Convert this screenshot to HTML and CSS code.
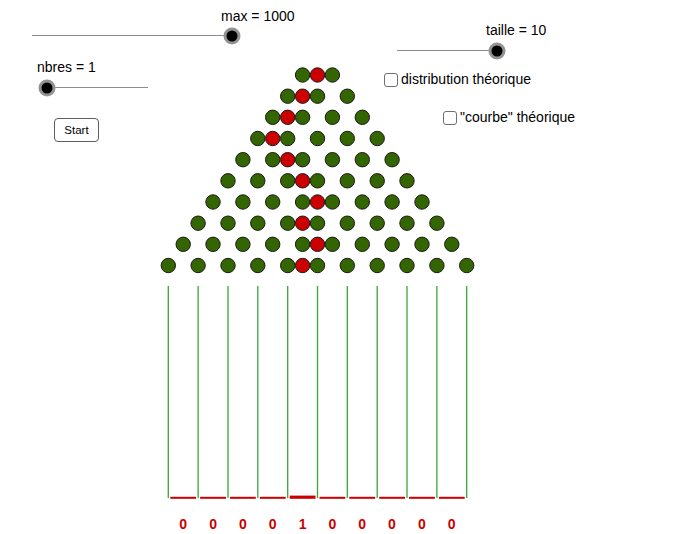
FILE: index.html
```html
<!DOCTYPE html>
<html lang="fr">
<head>
<meta charset="utf-8">
<title>Planche de Galton</title>
<link rel="stylesheet" href="styles.css">
</head>
<body>
<div class="applet">
  <div class="label label-max">max = 1000</div>
  <div class="slider slider-max"><span class="knob knob-end"></span></div>

  <div class="label label-nbres">nbres = 1</div>
  <div class="slider slider-nbres"><span class="knob knob-start"></span></div>

  <div class="label label-taille">taille = 10</div>
  <div class="slider slider-taille"><span class="knob knob-end"></span></div>

  <label class="check check-distrib"><span class="box"></span><span>distribution théorique</span></label>
  <label class="check check-courbe"><span class="box"></span><span>"courbe" théorique</span></label>

  <button class="start" type="button">Start</button>

  <svg class="board" width="340" height="450" viewBox="150 60 340 450" xmlns="http://www.w3.org/2000/svg">
    <g class="pegs" fill="#336600" stroke="#1a1a1a" stroke-width="1">
      <circle cx="302.6" cy="75" r="7.2"/><circle cx="332.4" cy="75" r="7.2"/>

      <circle cx="287.7" cy="96.2" r="7.2"/><circle cx="317.5" cy="96.2" r="7.2"/><circle cx="347.3" cy="96.2" r="7.2"/>

      <circle cx="272.7" cy="117.3" r="7.2"/><circle cx="302.6" cy="117.3" r="7.2"/><circle cx="332.4" cy="117.3" r="7.2"/><circle cx="362.3" cy="117.3" r="7.2"/>

      <circle cx="257.8" cy="138.5" r="7.2"/><circle cx="287.7" cy="138.5" r="7.2"/><circle cx="317.5" cy="138.5" r="7.2"/><circle cx="347.3" cy="138.5" r="7.2"/><circle cx="377.2" cy="138.5" r="7.2"/>

      <circle cx="242.9" cy="159.7" r="7.2"/><circle cx="272.7" cy="159.7" r="7.2"/><circle cx="302.6" cy="159.7" r="7.2"/><circle cx="332.4" cy="159.7" r="7.2"/><circle cx="362.3" cy="159.7" r="7.2"/><circle cx="392.1" cy="159.7" r="7.2"/>

      <circle cx="228.0" cy="180.8" r="7.2"/><circle cx="257.8" cy="180.8" r="7.2"/><circle cx="287.7" cy="180.8" r="7.2"/><circle cx="317.5" cy="180.8" r="7.2"/><circle cx="347.3" cy="180.8" r="7.2"/><circle cx="377.2" cy="180.8" r="7.2"/><circle cx="407.0" cy="180.8" r="7.2"/>

      <circle cx="213.0" cy="202" r="7.2"/><circle cx="242.9" cy="202" r="7.2"/><circle cx="272.7" cy="202" r="7.2"/><circle cx="302.6" cy="202" r="7.2"/><circle cx="332.4" cy="202" r="7.2"/><circle cx="362.3" cy="202" r="7.2"/><circle cx="392.1" cy="202" r="7.2"/><circle cx="422.0" cy="202" r="7.2"/>

      <circle cx="198.1" cy="223.2" r="7.2"/><circle cx="228.0" cy="223.2" r="7.2"/><circle cx="257.8" cy="223.2" r="7.2"/><circle cx="287.7" cy="223.2" r="7.2"/><circle cx="317.5" cy="223.2" r="7.2"/><circle cx="347.3" cy="223.2" r="7.2"/><circle cx="377.2" cy="223.2" r="7.2"/><circle cx="407.0" cy="223.2" r="7.2"/><circle cx="436.9" cy="223.2" r="7.2"/>

      <circle cx="183.2" cy="244.3" r="7.2"/><circle cx="213.0" cy="244.3" r="7.2"/><circle cx="242.9" cy="244.3" r="7.2"/><circle cx="272.7" cy="244.3" r="7.2"/><circle cx="302.6" cy="244.3" r="7.2"/><circle cx="332.4" cy="244.3" r="7.2"/><circle cx="362.3" cy="244.3" r="7.2"/><circle cx="392.1" cy="244.3" r="7.2"/><circle cx="422.0" cy="244.3" r="7.2"/><circle cx="451.8" cy="244.3" r="7.2"/>

      <circle cx="168.3" cy="265.5" r="7.2"/><circle cx="198.1" cy="265.5" r="7.2"/><circle cx="228.0" cy="265.5" r="7.2"/><circle cx="257.8" cy="265.5" r="7.2"/><circle cx="287.7" cy="265.5" r="7.2"/><circle cx="317.5" cy="265.5" r="7.2"/><circle cx="347.3" cy="265.5" r="7.2"/><circle cx="377.2" cy="265.5" r="7.2"/><circle cx="407.0" cy="265.5" r="7.2"/><circle cx="436.9" cy="265.5" r="7.2"/><circle cx="466.7" cy="265.5" r="7.2"/>
    </g>
    <g class="path" fill="#cc0000" stroke="#1a1a1a" stroke-width="1">
      <circle cx="317.5" cy="75" r="7.2"/>
      <circle cx="302.6" cy="96.2" r="7.2"/>
      <circle cx="287.7" cy="117.3" r="7.2"/>
      <circle cx="272.7" cy="138.5" r="7.2"/>
      <circle cx="287.7" cy="159.7" r="7.2"/>
      <circle cx="302.6" cy="180.8" r="7.2"/>
      <circle cx="317.5" cy="202" r="7.2"/>
      <circle cx="302.6" cy="223.2" r="7.2"/>
      <circle cx="317.5" cy="244.3" r="7.2"/>
      <circle cx="302.6" cy="265.5" r="7.2"/>
    </g>
    <g class="walls" stroke="#3aa53a" stroke-width="1.3">
      <line x1="168.3" y1="286" x2="168.3" y2="498"/>
      <line x1="198.1" y1="286" x2="198.1" y2="498"/>
      <line x1="228.0" y1="286" x2="228.0" y2="498"/>
      <line x1="257.8" y1="286" x2="257.8" y2="498"/>
      <line x1="287.7" y1="286" x2="287.7" y2="498"/>
      <line x1="317.5" y1="286" x2="317.5" y2="498"/>
      <line x1="347.3" y1="286" x2="347.3" y2="498"/>
      <line x1="377.2" y1="286" x2="377.2" y2="498"/>
      <line x1="407.0" y1="286" x2="407.0" y2="498"/>
      <line x1="436.9" y1="286" x2="436.9" y2="498"/>
      <line x1="466.7" y1="286" x2="466.7" y2="498"/>
    </g>
    <g class="bars" fill="#cc0000">
      <rect x="170.3" y="496.8" width="25.8" height="2"/>
      <rect x="200.1" y="496.8" width="25.9" height="2"/>
      <rect x="230.0" y="496.8" width="25.8" height="2"/>
      <rect x="259.8" y="496.8" width="25.9" height="2"/>
      <rect x="289.7" y="495.6" width="25.8" height="3.2"/>
      <rect x="319.5" y="496.8" width="25.8" height="2"/>
      <rect x="349.3" y="496.8" width="25.9" height="2"/>
      <rect x="379.2" y="496.8" width="25.8" height="2"/>
      <rect x="409.0" y="496.8" width="25.9" height="2"/>
      <rect x="438.9" y="496.8" width="25.8" height="2"/>
    </g>
  </svg>

  <div class="counts">
    <span>0</span><span>0</span><span>0</span><span>0</span><span>1</span><span>0</span><span>0</span><span>0</span><span>0</span><span>0</span>
  </div>
</div>
</body>
</html>
```
FILE: styles.css
```css
html, body {
  margin: 0;
  padding: 0;
  background: #ffffff;
}

.applet {
  position: relative;
  width: 685px;
  height: 534px;
  overflow: hidden;
  background: #ffffff;
  font-family: "Liberation Sans", Arial, sans-serif;
  color: #000;
}

.label {
  position: absolute;
  font-size: 14px;
  line-height: 16px;
  white-space: nowrap;
}

.label-max { left: 221px; top: 8px; }
.label-nbres { left: 37px; top: 59px; }
.label-taille { left: 486px; top: 22px; }

.slider {
  position: absolute;
  height: 0;
  border-top: 1px solid #8c8c8c;
}

.slider-max { left: 32px; top: 35px; width: 200px; }
.slider-nbres { left: 47px; top: 87px; width: 101px; }
.slider-taille { left: 397px; top: 50px; width: 100px; }

.knob {
  position: absolute;
  top: -0.5px;
  width: 11px;
  height: 11px;
  border-radius: 50%;
  background: #000;
  border: 3px solid #939393;
  transform: translate(-50%, -50%);
}

.knob-end { left: 100%; }
.knob-start { left: 0; }

.check {
  position: absolute;
  display: flex;
  align-items: center;
  gap: 3px;
  font-size: 14px;
  line-height: 16px;
  white-space: nowrap;
}

.check-distrib { left: 384px; top: 71px; }
.check-courbe { left: 443px; top: 109px; }

.box {
  box-sizing: border-box;
  width: 14px;
  height: 14px;
  border: 1px solid #707070;
  border-radius: 3px;
  background: #fff;
  margin-top: 1px;
}

.start {
  position: absolute;
  left: 54px;
  top: 118px;
  box-sizing: border-box;
  width: 45px;
  height: 24px;
  padding: 0;
  border: 1.5px solid #5e5e5e;
  border-radius: 4px;
  background: #fff;
  font-family: "Liberation Sans", Arial, sans-serif;
  font-size: 11.5px;
  color: #000;
}

.board {
  position: absolute;
  left: 150px;
  top: 60px;
}

.counts {
  position: absolute;
  left: 168.3px;
  top: 516px;
  display: flex;
  font-size: 14px;
  line-height: 16px;
  font-weight: bold;
  color: #cc0000;
}

.counts span {
  width: 29.84px;
  text-align: center;
}
```
